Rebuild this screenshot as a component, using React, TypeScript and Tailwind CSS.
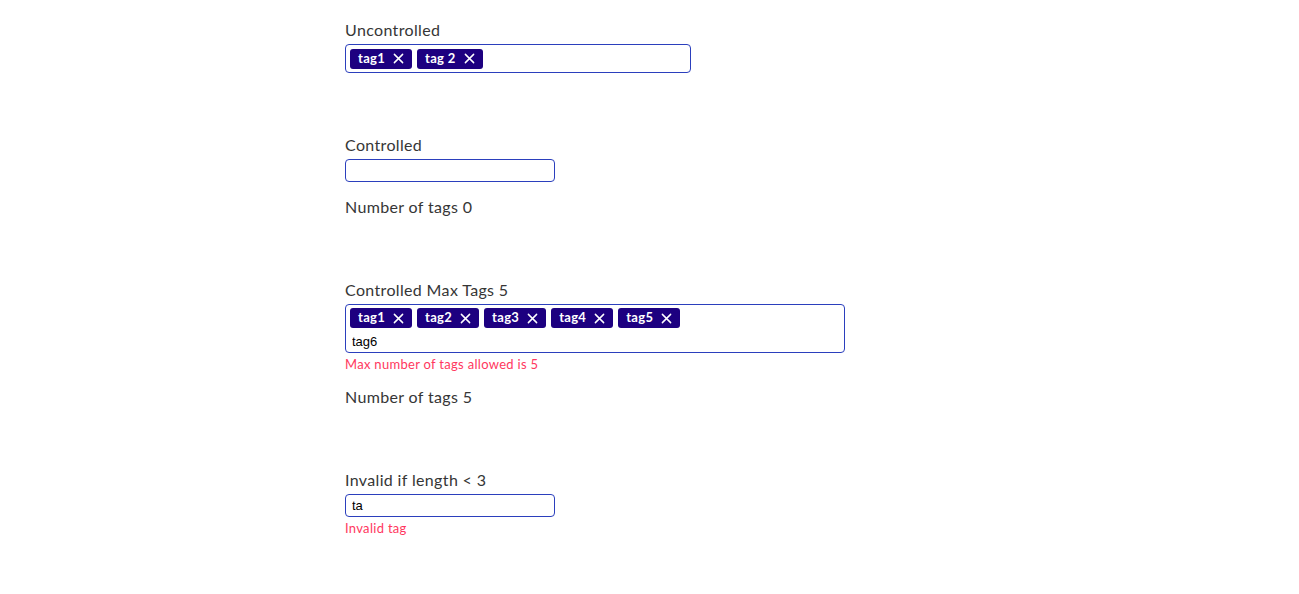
import { useState } from "react";

const font = { fontFamily: "Lato, 'Open Sans', sans-serif" };

function XIcon() {
  return (
    <svg width="11" height="11" viewBox="0 0 12 12" className="ml-[8px] shrink-0">
      <path d="M1.5 1.5 L10.5 10.5 M10.5 1.5 L1.5 10.5" stroke="white" strokeWidth="1.6" strokeLinecap="round" />
    </svg>
  );
}

function Tag({ label, onRemove }: { label: string; onRemove: () => void }) {
  return (
    <span className="flex h-[20px] items-center rounded-[3px] bg-[#1d0080] pl-[8px] pr-[8px] text-[13px] font-bold tracking-[0.3px] text-white">
      {label}
      <button type="button" onClick={onRemove} className="flex items-center">
        <XIcon />
      </button>
    </span>
  );
}

function TagInput({
  tags,
  setTags,
  width,
  value,
  wrap,
}: {
  tags: string[];
  setTags: (t: string[]) => void;
  width: string;
  value?: string;
  wrap?: boolean;
}) {
  const [text, setText] = useState(value ?? "");
  const inputStyle = { fontFamily: "'Liberation Sans', Arial, sans-serif" };

  if (tags.length === 0) {
    return (
      <div className={`${width} flex rounded-[4px] border border-[#2b3fbd] bg-white`}>
        <input
          value={text}
          onChange={(e) => setText(e.target.value)}
          className="block h-[21px] w-full min-w-0 bg-transparent px-[6px] text-[13px] text-black outline-none"
          style={inputStyle}
        />
      </div>
    );
  }

  return (
    <div className={`${width} rounded-[4px] border border-[#2b3fbd] bg-white px-[4px] pt-[3px] ${wrap ? "pb-0" : "pb-[3px]"}`}>
      <div className={`flex ${wrap ? "flex-col gap-[3px]" : "items-center"}`}>
        <div className="flex gap-[5px]">
          {tags.map((t, i) => (
            <Tag key={t + i} label={t} onRemove={() => setTags(tags.filter((_, j) => j !== i))} />
          ))}
        </div>
        <input
          value={text}
          onChange={(e) => setText(e.target.value)}
          className={`block h-[21px] min-w-0 shrink-0 bg-transparent text-[13px] text-black outline-none ${wrap ? "w-full px-[2px]" : "flex-1 px-[6px]"}`}
          style={inputStyle}
        />
      </div>
    </div>
  );
}

export default function App() {
  const [uncontrolled, setUncontrolled] = useState(["tag1", "tag 2"]);
  const [controlled, setControlled] = useState<string[]>([]);
  const [maxTags, setMaxTags] = useState(["tag1", "tag2", "tag3", "tag4", "tag5"]);
  const [invalid, setInvalid] = useState<string[]>([]);

  const label = "mb-[2px] block text-[16px] leading-[24px] tracking-[0.35px]";

  return (
    <div className="min-h-screen bg-white text-[#363636]" style={font}>
      <div className="mx-auto w-[609px] pt-[18px]">
        <section>
          <label className={label}>Uncontrolled</label>
          <TagInput tags={uncontrolled} setTags={setUncontrolled} width="w-[346px]" />
        </section>

        <section className="mt-[60px]">
          <label className={label}>Controlled</label>
          <TagInput tags={controlled} setTags={setControlled} width="w-[210px]" />
          <p className="mt-[13px] text-[16px] leading-[24px] tracking-[0.35px]">Number of tags {controlled.length}</p>
        </section>

        <section className="mt-[59px]">
          <label className={label}>Controlled Max Tags 5</label>
          <TagInput tags={maxTags} setTags={setMaxTags} width="w-[500px]" value="tag6" wrap />
          <p className="mt-[3px] text-[13px] leading-[16px] tracking-[0.3px] text-[#ff3860]">Max number of tags allowed is 5</p>
          <p className="mt-[13px] text-[16px] leading-[24px] tracking-[0.35px]">Number of tags {maxTags.length}</p>
        </section>

        <section className="mt-[59px]">
          <label className={label}>Invalid if length &lt; 3</label>
          <TagInput tags={invalid} setTags={setInvalid} width="w-[210px]" value="ta" />
          <p className="mt-[3px] text-[13px] leading-[16px] tracking-[0.3px] text-[#ff3860]">Invalid tag</p>
        </section>
      </div>
    </div>
  );
}
